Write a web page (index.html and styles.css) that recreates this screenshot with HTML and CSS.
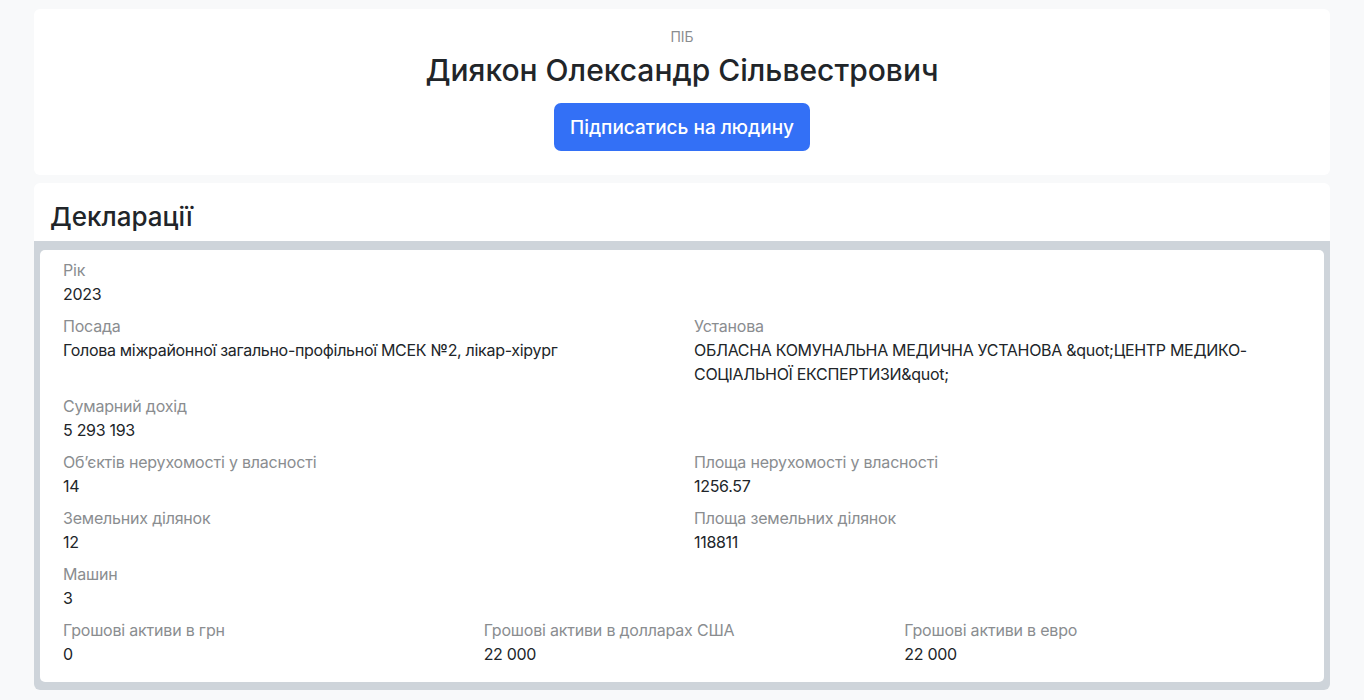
FILE: index.html
```html
<!DOCTYPE html>
<html lang="uk">
<head>
  <meta charset="UTF-8">
  <title>Диякон Олександр Сільвестрович</title>
  <link rel="stylesheet" href="styles.css">
</head>
<body>
  <div class="container">

    <!-- Person header -->
    <div class="card person">
      <div class="muted-label">ПІБ</div>
      <h1 class="person-name">Диякон Олександр Сільвестрович</h1>
      <button class="btn-primary">Підписатись на людину</button>
    </div>

    <!-- Declarations -->
    <div class="card decl">
      <h2 class="decl-title">Декларації</h2>
      <div class="decl-list">
        <div class="decl-item">
          <div class="row">
            <div class="field col-12">
              <div class="label">Рік</div>
              <div class="value">2023</div>
            </div>
          </div>
          <div class="row">
            <div class="field col-6">
              <div class="label">Посада</div>
              <div class="value">Голова міжрайонної загально-профільної МСЕК №2, лікар-хірург</div>
            </div>
            <div class="field col-6">
              <div class="label">Установа</div>
              <div class="value">ОБЛАСНА КОМУНАЛЬНА МЕДИЧНА УСТАНОВА &amp;quot;ЦЕНТР МЕДИКО-СОЦІАЛЬНОЇ ЕКСПЕРТИЗИ&amp;quot;</div>
            </div>
          </div>
          <div class="row">
            <div class="field col-12">
              <div class="label">Сумарний дохід</div>
              <div class="value">5 293 193</div>
            </div>
          </div>
          <div class="row">
            <div class="field col-6">
              <div class="label">Об’єктів нерухомості у власності</div>
              <div class="value">14</div>
            </div>
            <div class="field col-6">
              <div class="label">Площа нерухомості у власності</div>
              <div class="value">1256.57</div>
            </div>
          </div>
          <div class="row">
            <div class="field col-6">
              <div class="label">Земельних ділянок</div>
              <div class="value">12</div>
            </div>
            <div class="field col-6">
              <div class="label">Площа земельних ділянок</div>
              <div class="value">118811</div>
            </div>
          </div>
          <div class="row">
            <div class="field col-12">
              <div class="label">Машин</div>
              <div class="value">3</div>
            </div>
          </div>
          <div class="row">
            <div class="field col-4">
              <div class="label">Грошові активи в грн</div>
              <div class="value">0</div>
            </div>
            <div class="field col-4">
              <div class="label">Грошові активи в долларах США</div>
              <div class="value">22 000</div>
            </div>
            <div class="field col-4">
              <div class="label">Грошові активи в евро</div>
              <div class="value">22 000</div>
            </div>
          </div>
        </div>
      </div>
    </div>

  </div>
</body>
</html>
```

FILE: styles.css
```css
* {
  box-sizing: border-box;
}
body {
  margin: 0;
  background: #f8f9fa;
  font-family: Inter, 'Noto Sans', sans-serif;
  color: #212529;
}
.container {
  width: 1296px;
  margin: 0 auto;
  padding-top: 9px;
  display: flex;
  flex-direction: column;
  gap: 8px;
}
.card {
  background: #fff;
  border-radius: 6px;
}
.person {
  display: flex;
  flex-direction: column;
  align-items: center;
  padding: 18px 16px 24px;
}
.muted-label {
  font-size: 14px;
  line-height: 20px;
  margin-bottom: 5px;
  color: #8a8d90;
}
.person-name {
  margin: 0 0 15px;
  font-size: 30px;
  line-height: 36px;
  font-weight: 500;
}
.btn-primary {
  height: 48px;
  padding: 0 16px;
  border: none;
  border-radius: 7px;
  background: #3370f6;
  color: #fff;
  font-family: inherit;
  font-size: 19px;
  font-weight: 500;
  cursor: pointer;
}
.decl {
  overflow: hidden;
}
.decl-title {
  margin: 0;
  padding: 0 16px;
  height: 58px;
  line-height: 68px;
  font-size: 26px;
  font-weight: 500;
}
.decl-list {
  background: #ced4da;
  padding: 9px 6px 8px;
}
.decl-item {
  background: #fff;
  border-radius: 5px;
  padding: 8px 23px 8px;
}
.row {
  display: flex;
  margin: 0 -12px;
}
.field {
  padding: 0 12px;
  margin-bottom: 8px;
}
.col-12 { width: 100%; }
.col-6 { width: 50%; }
.col-4 { width: 33.3333%; }
.label {
  font-size: 16px;
  line-height: 24px;
  color: #8a8d90;
  letter-spacing: -0.2px;
}
.value {
  font-size: 16px;
  line-height: 24px;
  letter-spacing: -0.3px;
}
```
